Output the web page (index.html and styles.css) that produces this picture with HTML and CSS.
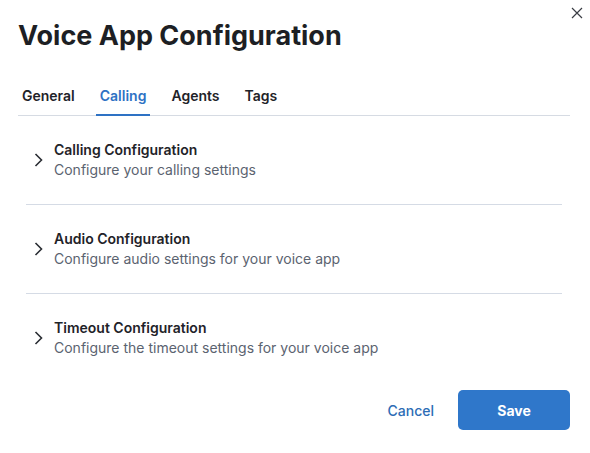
FILE: index.html
```html
<!DOCTYPE html>
<html lang="en">
<head>
<meta charset="utf-8">
<link rel="stylesheet" href="styles.css">
</head>
<body>
<div class="dialog">
  <button class="close" aria-label="Close">
    <svg width="12" height="12" viewBox="0 0 12 12"><path d="M1 1L11 11M11 1L1 11" stroke="#3a3d44" stroke-width="1.2" fill="none"/></svg>
  </button>
  <h1 class="title">Voice App Configuration</h1>
  <nav class="tabs">
    <span class="tab">General</span>
    <span class="tab active">Calling</span>
    <span class="tab">Agents</span>
    <span class="tab">Tags</span>
  </nav>
  <div class="sections">
    <div class="item">
      <svg class="chev" width="9" height="14" viewBox="0 0 9 14"><path d="M1.5 1L7.5 7L1.5 13" stroke="#2a2d33" stroke-width="1.6" fill="none"/></svg>
      <div class="texts">
        <div class="item-title">Calling Configuration</div>
        <div class="item-sub">Configure your calling settings</div>
      </div>
    </div>
    <div class="item">
      <svg class="chev" width="9" height="14" viewBox="0 0 9 14"><path d="M1.5 1L7.5 7L1.5 13" stroke="#2a2d33" stroke-width="1.6" fill="none"/></svg>
      <div class="texts">
        <div class="item-title">Audio Configuration</div>
        <div class="item-sub">Configure audio settings for your voice app</div>
      </div>
    </div>
    <div class="item">
      <svg class="chev" width="9" height="14" viewBox="0 0 9 14"><path d="M1.5 1L7.5 7L1.5 13" stroke="#2a2d33" stroke-width="1.6" fill="none"/></svg>
      <div class="texts">
        <div class="item-title">Timeout Configuration</div>
        <div class="item-sub">Configure the timeout settings for your voice app</div>
      </div>
    </div>
  </div>
  <div class="actions">
    <button class="btn-cancel">Cancel</button>
    <button class="btn-save">Save</button>
  </div>
</div>
</body>
</html>
```
FILE: styles.css
```css
* { box-sizing: border-box; }
html, body { margin: 0; padding: 0; background: #fff; }
body { font-family: Inter, "Noto Sans", sans-serif; color: #1e2127; }
.dialog { position: relative; width: 590px; height: 453px; padding: 19px 20px 0 18px; }
.close { position: absolute; top: 7px; right: 7px; background: none; border: 0; padding: 0; width: 12px; height: 12px; cursor: pointer; display: flex; }
.title { margin: 0; font-size: 27px; line-height: 34px; font-weight: 700; color: #1d1f24; }
.tabs { display: flex; gap: 17px; margin-top: 29px; border-bottom: 1px solid #d6dbe3; height: 34px; }
.tab { font-size: 14px; font-weight: 600; line-height: 20px; padding: 4px 4px 0; color: #1f2329; }
.tab.active { color: #2e72c4; border-bottom: 2px solid #2e72c4; margin-bottom: -1px; }
.sections { padding: 0 8px 0 8px; }
.item { display: flex; align-items: center; padding: 24px 0 24px 8px; border-bottom: 1px solid #d5dbe5; }
.item:last-child { border-bottom: 0; }
.chev { flex: none; margin-right: 11px; margin-top: -1px; }
.item-title { font-size: 14px; font-weight: 600; line-height: 20px; color: #1f2329; }
.item-sub { font-size: 14px; line-height: 20px; color: #5b6370; }
.actions { display: flex; justify-content: flex-end; align-items: center; gap: 8px; margin-top: 8px; }
.btn-cancel { font-family: inherit; background: none; border: 0; font-size: 14px; font-weight: 500; color: #2d6cb5; padding: 0 16px; height: 40px; }
.btn-save { font-family: inherit; background: #2f77ca; border: 0; border-radius: 5px; color: #fff; font-size: 14px; font-weight: 700; width: 112px; height: 40px; }
```
